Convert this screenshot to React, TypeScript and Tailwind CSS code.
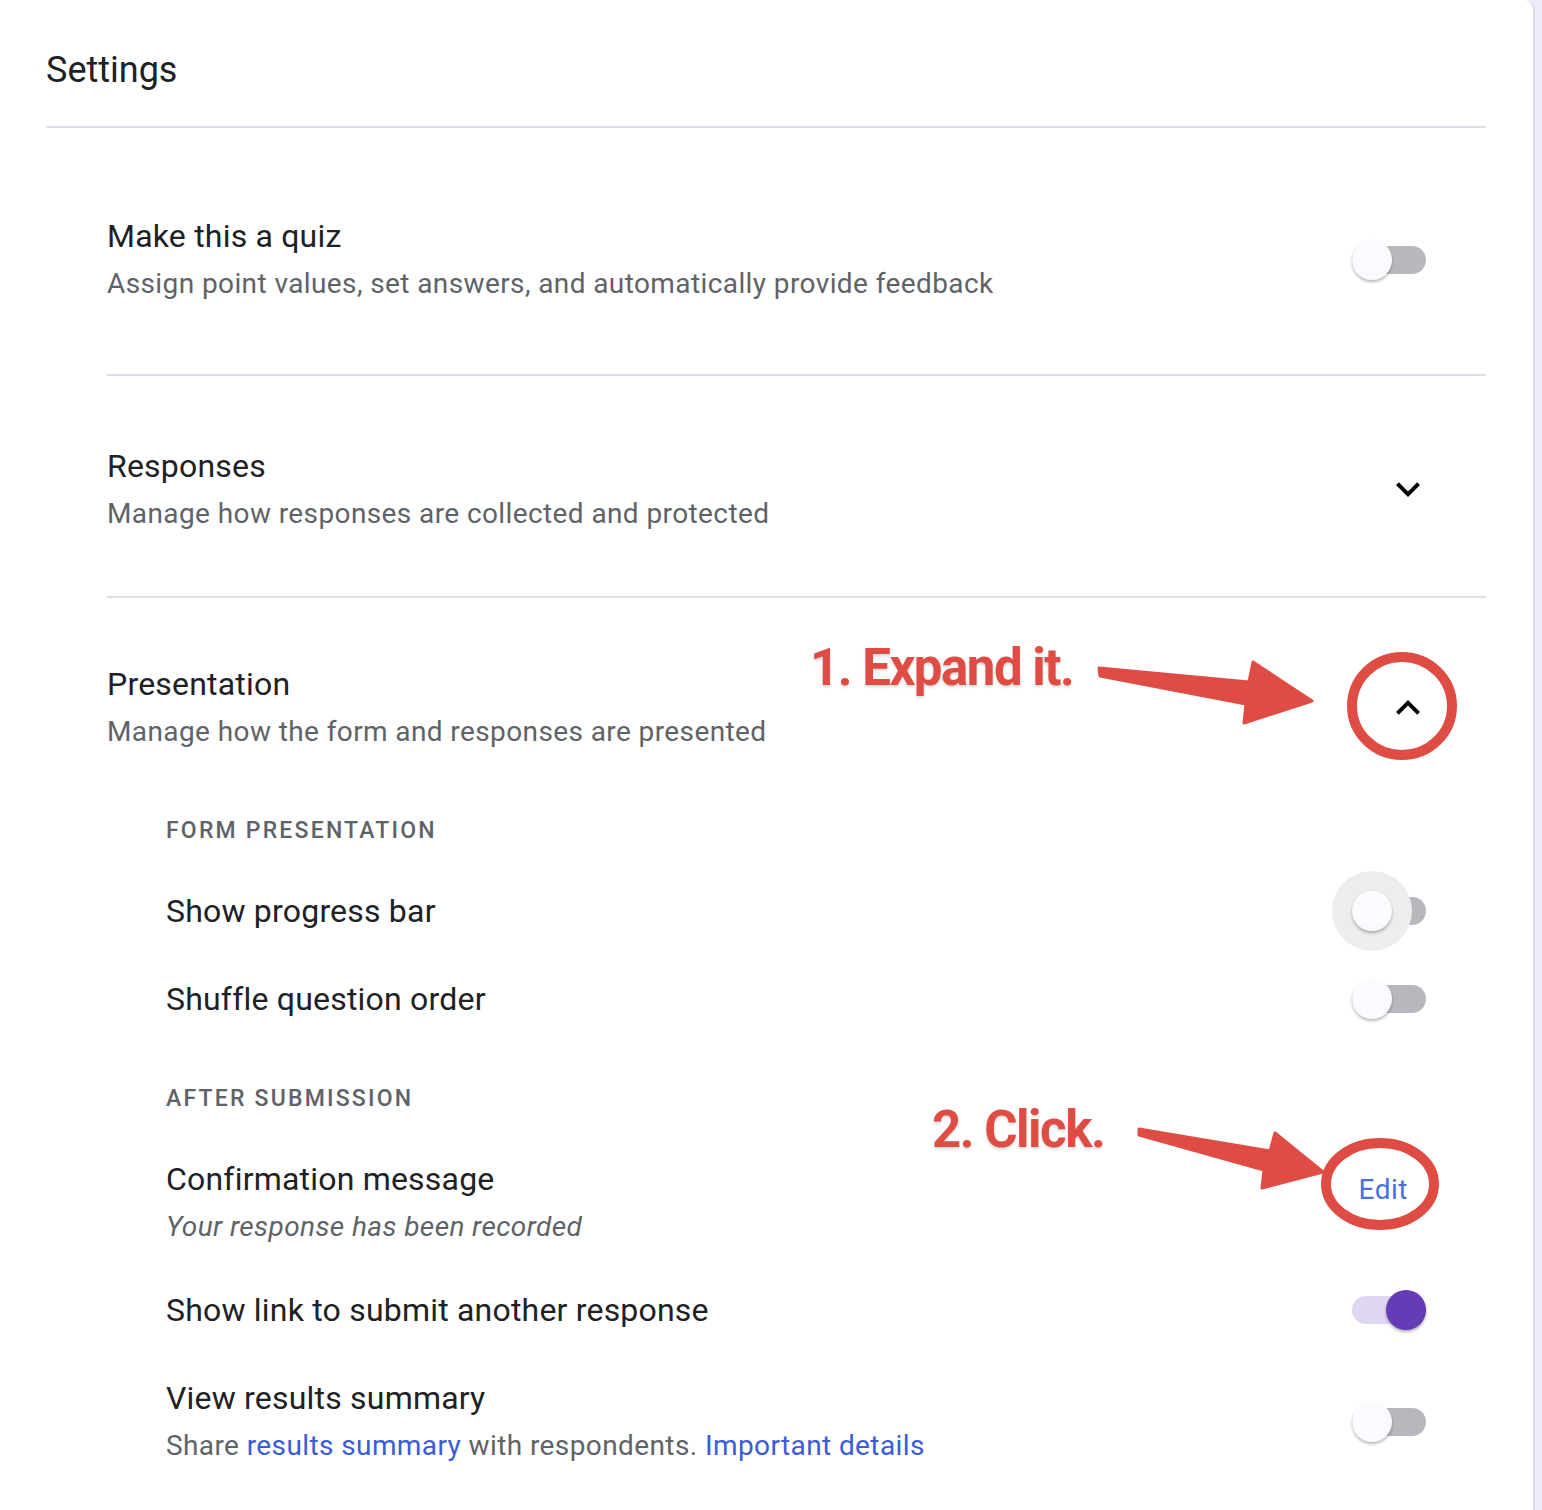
import React from "react";

type ToggleProps = {
  on?: boolean;
  halo?: boolean;
};

function Toggle({ on = false, halo = false }: ToggleProps) {
  return (
    <div className="relative h-[40px] w-[74px] shrink-0">
      <div
        className={
          on
            ? "absolute left-0 top-[6px] h-[28px] w-[74px] rounded-full bg-[#ded6f2]"
            : "absolute left-0 top-[6px] h-[28px] w-[74px] rounded-full bg-[#b8b7bd]"
        }
      />
      {halo && (
        <div className="absolute left-[-20px] top-[-20px] h-[80px] w-[80px] rounded-full bg-[#ededee]" />
      )}
      <div
        className={
          on
            ? "absolute left-[34px] top-0 h-[40px] w-[40px] rounded-full bg-[#643cb6] shadow-[0_2px_3px_rgba(0,0,0,0.3)]"
            : "absolute left-0 top-0 h-[40px] w-[40px] rounded-full bg-[#fbfbff] shadow-[0_2px_3px_rgba(0,0,0,0.28)]"
        }
      />
    </div>
  );
}

function Chevron({ up = false }: { up?: boolean }) {
  return (
    <svg width="48" height="48" viewBox="0 0 24 24" className="shrink-0">
      <path
        d={up ? "M7.4 15.4 12 10.8l4.6 4.6L18 14l-6-6-6 6z" : "M7.4 8.6 12 13.2l4.6-4.6L18 10l-6 6-6-6z"}
        fill="#000"
      />
    </svg>
  );
}

const title = "text-[32px] leading-[44px] tracking-[0.2px] text-[#202124]";
const sub = "mt-[4px] text-[28px] leading-[44px] tracking-[0.4px] text-[#5f6368]";
const heading = "text-[23px] leading-[30px] font-medium tracking-[2.2px] text-[#5f6368]";

export default function App() {
  return (
    <div
      className="relative min-h-[1510px] w-full bg-[#f0ebf8]"
      style={{ fontFamily: "Roboto, 'Liberation Sans', sans-serif" }}
    >
      <div className="min-h-[1510px] w-[1535px] rounded-tr-[10px] border-r-2 border-[#dcd9e6] bg-white pl-[46px]">
        <div className="w-[1440px]">
          {/* header */}
          <div className="flex h-[126px] items-center pt-[14px]">
            <h1 className="text-[36px] leading-[44px] text-[#202124]">Settings</h1>
          </div>
          <div className="h-[2px] bg-[#e0dde8]" />

          <div className="pl-[61px]">
            {/* quiz */}
            <div className="flex items-center justify-between pb-[68px] pt-[86px]">
              <div>
                <div className={title}>Make this a quiz</div>
                <div className={sub}>Assign point values, set answers, and automatically provide feedback</div>
              </div>
              <div className="mr-[60px]">
                <Toggle />
              </div>
            </div>
            <div className="h-[2px] bg-[#e0dde8]" />

            {/* responses */}
            <div className="flex items-center justify-between pb-[60px] pt-[68px]">
              <div>
                <div className={title}>Responses</div>
                <div className={sub}>Manage how responses are collected and protected</div>
              </div>
              <div className="mb-[3px] mr-[54px]">
                <Chevron />
              </div>
            </div>
            <div className="h-[2px] bg-[#e0dde8]" />

            {/* presentation */}
            <div className="flex items-center justify-between pt-[64px]">
              <div>
                <div className={title}>Presentation</div>
                <div className={sub}>Manage how the form and responses are presented</div>
              </div>
              <div className="mr-[54px]">
                <Chevron up />
              </div>
            </div>

            <div className="pl-[59px]">
              <div className={heading + " mt-[62px]"}>FORM PRESENTATION</div>
              <div className="mt-[21px] flex h-[88px] items-center justify-between">
                <div className={title}>Show progress bar</div>
                <div className="mr-[60px]">
                  <Toggle halo />
                </div>
              </div>
              <div className="flex h-[88px] items-center justify-between">
                <div className={title}>Shuffle question order</div>
                <div className="mr-[60px]">
                  <Toggle />
                </div>
              </div>

              <div className={heading + " mt-[41px]"}>AFTER SUBMISSION</div>
              <div className="mt-[43px] flex justify-between">
                <div>
                  <div className={title}>Confirmation message</div>
                  <div className={sub + " italic"}>Your response has been recorded</div>
                </div>
                <div className="mr-[78px] mt-[13px] self-start text-[28px] leading-[40px] tracking-[0.5px] text-[#4a71e2]">
                  Edit
                </div>
              </div>

              <div className="mt-[17px] flex h-[88px] items-center justify-between">
                <div className={title}>Show link to submit another response</div>
                <div className="mr-[60px]">
                  <Toggle on />
                </div>
              </div>

              <div className="mt-[22px] flex items-center justify-between">
                <div>
                  <div className={title}>View results summary</div>
                  <div className={sub}>
                    Share <span className="text-[#3b5bd9]">results summary</span> with respondents.{" "}
                    <span className="text-[#3b5bd9]">Important details</span>
                  </div>
                </div>
                <div className="mr-[60px]">
                  <Toggle />
                </div>
              </div>
            </div>
          </div>
        </div>
      </div>

      {/* annotations */}
      <svg
        className="pointer-events-none absolute left-0 top-0"
        width="1542"
        height="1510"
        viewBox="0 0 1542 1510"
      >
        <g fill="#df4c44" stroke="#df4c44" strokeLinejoin="round" strokeWidth="3">
          <polygon points="1099,668 1249,682 1253,662 1312,701 1244,723 1246,704 1100,676" />
          <polygon points="1139,1129 1270,1151 1275,1133 1323,1172 1262,1188 1264,1170 1139,1135" />
        </g>
        <g fill="none" stroke="#df4c44" strokeWidth="10">
          <ellipse cx="1402" cy="706" rx="50" ry="49" />
          <ellipse cx="1380" cy="1184" rx="54" ry="41" />
        </g>
      </svg>
      <div className="pointer-events-none absolute left-[810px] top-[638px] text-[51px] font-bold leading-[60px] tracking-[-1.5px] text-[#df4c44] [text-shadow:0_2px_3px_rgba(0,0,0,0.15)]">
        1. Expand it.
      </div>
      <div className="pointer-events-none absolute left-[932px] top-[1100px] text-[51px] font-bold leading-[60px] tracking-[-1.5px] text-[#df4c44] [text-shadow:0_2px_3px_rgba(0,0,0,0.15)]">
        2. Click.
      </div>
    </div>
  );
}
